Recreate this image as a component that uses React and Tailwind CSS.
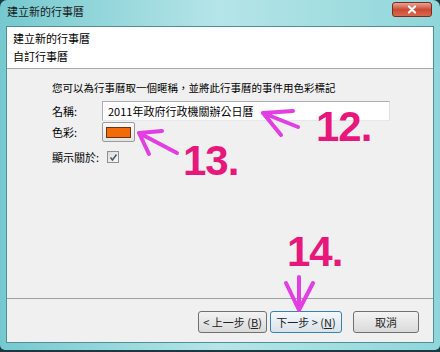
export default function App() {
  return (
    <div className="relative w-[440px] h-[352px] bg-[#1c3843] overflow-hidden font-['Noto_Sans_CJK_TC','Noto_Sans',sans-serif] text-[11px] text-black">
      <div className="flex h-[350px] flex-col rounded-t-[7px] rounded-b-[5px] bg-gradient-to-r from-[#74c9cf] via-[#b5e5e8] to-[#8fd6da] pl-[6px] pr-[6px] pb-[7px]">
        {/* title bar */}
        <div className="flex h-[26px] items-center pl-[1px] pb-[4px] text-[11px] leading-none text-[#1a1a1a]">
          建立新的行事曆
        </div>
        {/* content */}
        <div className="flex flex-1 flex-col border border-[#4f8f95] bg-[#f0f0f0]">
          <div className="h-[42px] border-b border-[#a9a9a9] bg-white pl-[6px] pt-[2px] leading-[18px]">
            <div>建立新的行事曆</div>
            <div>自訂行事曆</div>
          </div>
          <div className="flex-1 pl-[45px] pt-[11px]">
            <div className="h-[16px] text-[10.5px] leading-[16px]">
              您可以為行事曆取一個暱稱，並將此行事曆的事件用色彩標記
            </div>
            <div className="mt-[5px] flex h-[20px] items-center">
              <div className="w-[50px]">名稱:</div>
              <div className="flex h-[20px] w-[288px] items-center border border-[#abadb3] border-r-[#dbdfe6] border-b-[#e3e9ef] bg-white pl-[5px] text-[11px]">
                2011年政府行政機關辦公日曆
              </div>
            </div>
            <div className="mt-[1px] flex h-[20px] items-center">
              <div className="w-[50px]">色彩:</div>
              <div className="flex h-[20px] w-[33px] items-center justify-center rounded-[2px] border border-[#9a9a9a] bg-gradient-to-b from-[#fafafa] to-[#e4e4e4]">
                <div className="h-[11px] w-[25px] border border-[#6b3310] bg-[#f26a0a]" />
              </div>
            </div>
            <div className="mt-[5px] flex h-[20px] items-center">
              <div className="w-[55px]">顯示關於:</div>
              <div className="flex h-[12px] w-[12px] items-center justify-center border border-[#8e8f8f] bg-gradient-to-br from-[#dcdcdc] to-[#fafafa]">
                <svg width="9" height="9" viewBox="0 0 9 9">
                  <path d="M1.5 4.5 L3.5 7 L7.5 1.5" fill="none" stroke="#4a5a6e" strokeWidth="1.6" />
                </svg>
              </div>
            </div>
          </div>
          <div className="flex h-[44px] items-start justify-end border-t border-[#a0a0a0] pr-[14px] pt-[12px]">
            <div className="flex h-[22px] w-[69px] items-center justify-center rounded-[3px] border border-[#707070] bg-gradient-to-b from-[#f3f3f3] to-[#dadada] text-[11px] text-[#222]">
              &lt; 上一步 (<span className="underline">B</span>)
            </div>
            <div className="ml-[3px] flex h-[22px] w-[72px] items-center justify-center rounded-[3px] border border-[#3c7fb1] bg-gradient-to-b from-[#f4f8fb] to-[#d9e3ea] text-[11px] text-[#222]">
              下一步 &gt; (<span className="underline">N</span>)
            </div>
            <div className="ml-[11px] flex h-[22px] w-[66px] items-center justify-center rounded-[3px] border border-[#707070] bg-gradient-to-b from-[#f3f3f3] to-[#dadada] text-[11px] text-[#222]">
              取消
            </div>
          </div>
        </div>
      </div>

      {/* close button */}
      <div className="absolute right-[8px] top-[2px] flex h-[15px] w-[40px] items-center justify-center rounded-[3px] border border-[#7a2a1e] bg-gradient-to-b from-[#e8a394] via-[#cc4a33] to-[#d9684c]">
        <svg width="10" height="9" viewBox="0 0 10 9">
          <path d="M2 1.5 L8 7.5 M8 1.5 L2 7.5" stroke="white" strokeWidth="2.2" strokeLinecap="round" />
        </svg>
      </div>

      {/* annotations */}
      <svg className="pointer-events-none absolute inset-0" width="440" height="352" viewBox="0 0 440 352">
        <g stroke="#e23ee4" strokeWidth="4" strokeLinecap="round" strokeLinejoin="round" fill="none">
          <path d="M298 127 L263 113 M263 113 L293 111 M263 113 L281 135" />
          <path d="M177 153 L139 133 M139 133 L162 131 M139 133 L149 154" />
          <path d="M299 277 L299 310 M299 310 L286 283 M299 310 L313 283" />
        </g>
      </svg>
      <div className="absolute left-[316px] top-[106px] font-['Liberation_Sans',Arial,sans-serif] text-[42px] font-bold leading-none tracking-[-1px] text-[#e8177c]">
        12.
      </div>
      <div className="absolute left-[183px] top-[140px] font-['Liberation_Sans',Arial,sans-serif] text-[42px] font-bold leading-none tracking-[-1px] text-[#e8177c]">
        13.
      </div>
      <div className="absolute left-[287px] top-[231px] font-['Liberation_Sans',Arial,sans-serif] text-[42px] font-bold leading-none tracking-[-1px] text-[#e8177c]">
        14.
      </div>
    </div>
  );
}
